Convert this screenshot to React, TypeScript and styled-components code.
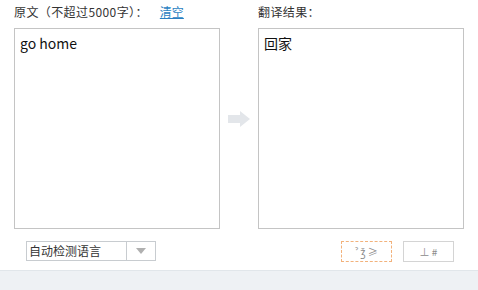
import styled, { createGlobalStyle } from 'styled-components';

const GlobalStyle = createGlobalStyle`
  html, body {
    margin: 0;
    padding: 0;
    background: #ffffff;
  }
  body {
    font-family: 'Noto Sans CJK SC', 'Noto Sans', sans-serif;
    color: #333333;
  }
`;

const App = () => {
  return (
    <>
      <GlobalStyle />
      <Page>
        <Main>
          <Column>
            <Label>
              原文（不超过5000字）：<ClearLink>清空</ClearLink>
            </Label>
            <TextBox>go home</TextBox>
          </Column>
          <ArrowCell>
            <svg width="22" height="16" viewBox="0 0 22 16">
              <path d="M0 4h12V0l10 8-10 8v-4H0z" fill="#e3e6ea" />
            </svg>
          </ArrowCell>
          <Column>
            <Label>翻译结果：</Label>
            <TextBox>回家</TextBox>
          </Column>
        </Main>
        <Toolbar>
          <Select>
            <SelectText>自动检测语言</SelectText>
            <SelectArrow>
              <svg width="10" height="6" viewBox="0 0 10 6">
                <path d="M0 0h10L5 6z" fill="#b0b0b0" />
              </svg>
            </SelectArrow>
          </Select>
          <Buttons>
            <ToolButton primary>ˀ ǯ ≥</ToolButton>
            <ToolButton>⊥ #</ToolButton>
          </Buttons>
        </Toolbar>
        <Footer />
      </Page>
    </>
  );
};

const Page = styled.div`
  width: 478px;
  height: 290px;
  display: flex;
  flex-direction: column;
  overflow: hidden;
`;

const Main = styled.div`
  display: flex;
  padding: 0 14px;
  height: 230px;
`;

const Column = styled.div`
  width: 206px;
  display: flex;
  flex-direction: column;
`;

const Label = styled.div`
  height: 28px;
  line-height: 24px;
  font-size: 12px;
  letter-spacing: 0.4px;
  color: #333333;
  white-space: nowrap;
`;

const ClearLink = styled.a`
  margin-left: 12px;
  letter-spacing: 0;
  color: #2a7fc2;
  text-decoration: underline;
  cursor: pointer;
`;

const TextBox = styled.div`
  box-sizing: border-box;
  height: 201px;
  border: 1px solid #c4c4c4;
  padding: 5px 5px;
  font-size: 14px;
  line-height: 18px;
  color: #111111;
`;

const ArrowCell = styled.div`
  width: 38px;
  display: flex;
  align-items: center;
  justify-content: center;
  padding-top: 8px;
`;

const Toolbar = styled.div`
  height: 40px;
  display: flex;
  align-items: flex-start;
  justify-content: space-between;
  padding: 11px 24px 0 26px;
  box-sizing: border-box;
`;

const Select = styled.div`
  box-sizing: border-box;
  width: 130px;
  height: 20px;
  display: flex;
  border: 1px solid #c8ccd0;
  background: #ffffff;
`;

const SelectText = styled.div`
  flex: 1;
  font-size: 12px;
  line-height: 18px;
  padding-left: 2px;
  color: #333333;
`;

const SelectArrow = styled.div`
  width: 28px;
  border-left: 1px solid #c8ccd0;
  display: flex;
  align-items: center;
  justify-content: center;
`;

const Buttons = styled.div`
  display: flex;
  gap: 11px;
`;

const ToolButton = styled.div<{ primary?: boolean }>`
  box-sizing: border-box;
  width: 51px;
  height: 21px;
  border: 1px ${({ primary }) => (primary ? 'dashed #f2b27c' : 'solid #d4d4d4')};
  background: #ffffff;
  font-size: 10px;
  line-height: 19px;
  text-align: center;
  color: #8a8a8a;
`;

const Footer = styled.div`
  flex: 1;
  border-top: 1px solid #e1e6ea;
  background: #eef1f4;
`;

export default App;
